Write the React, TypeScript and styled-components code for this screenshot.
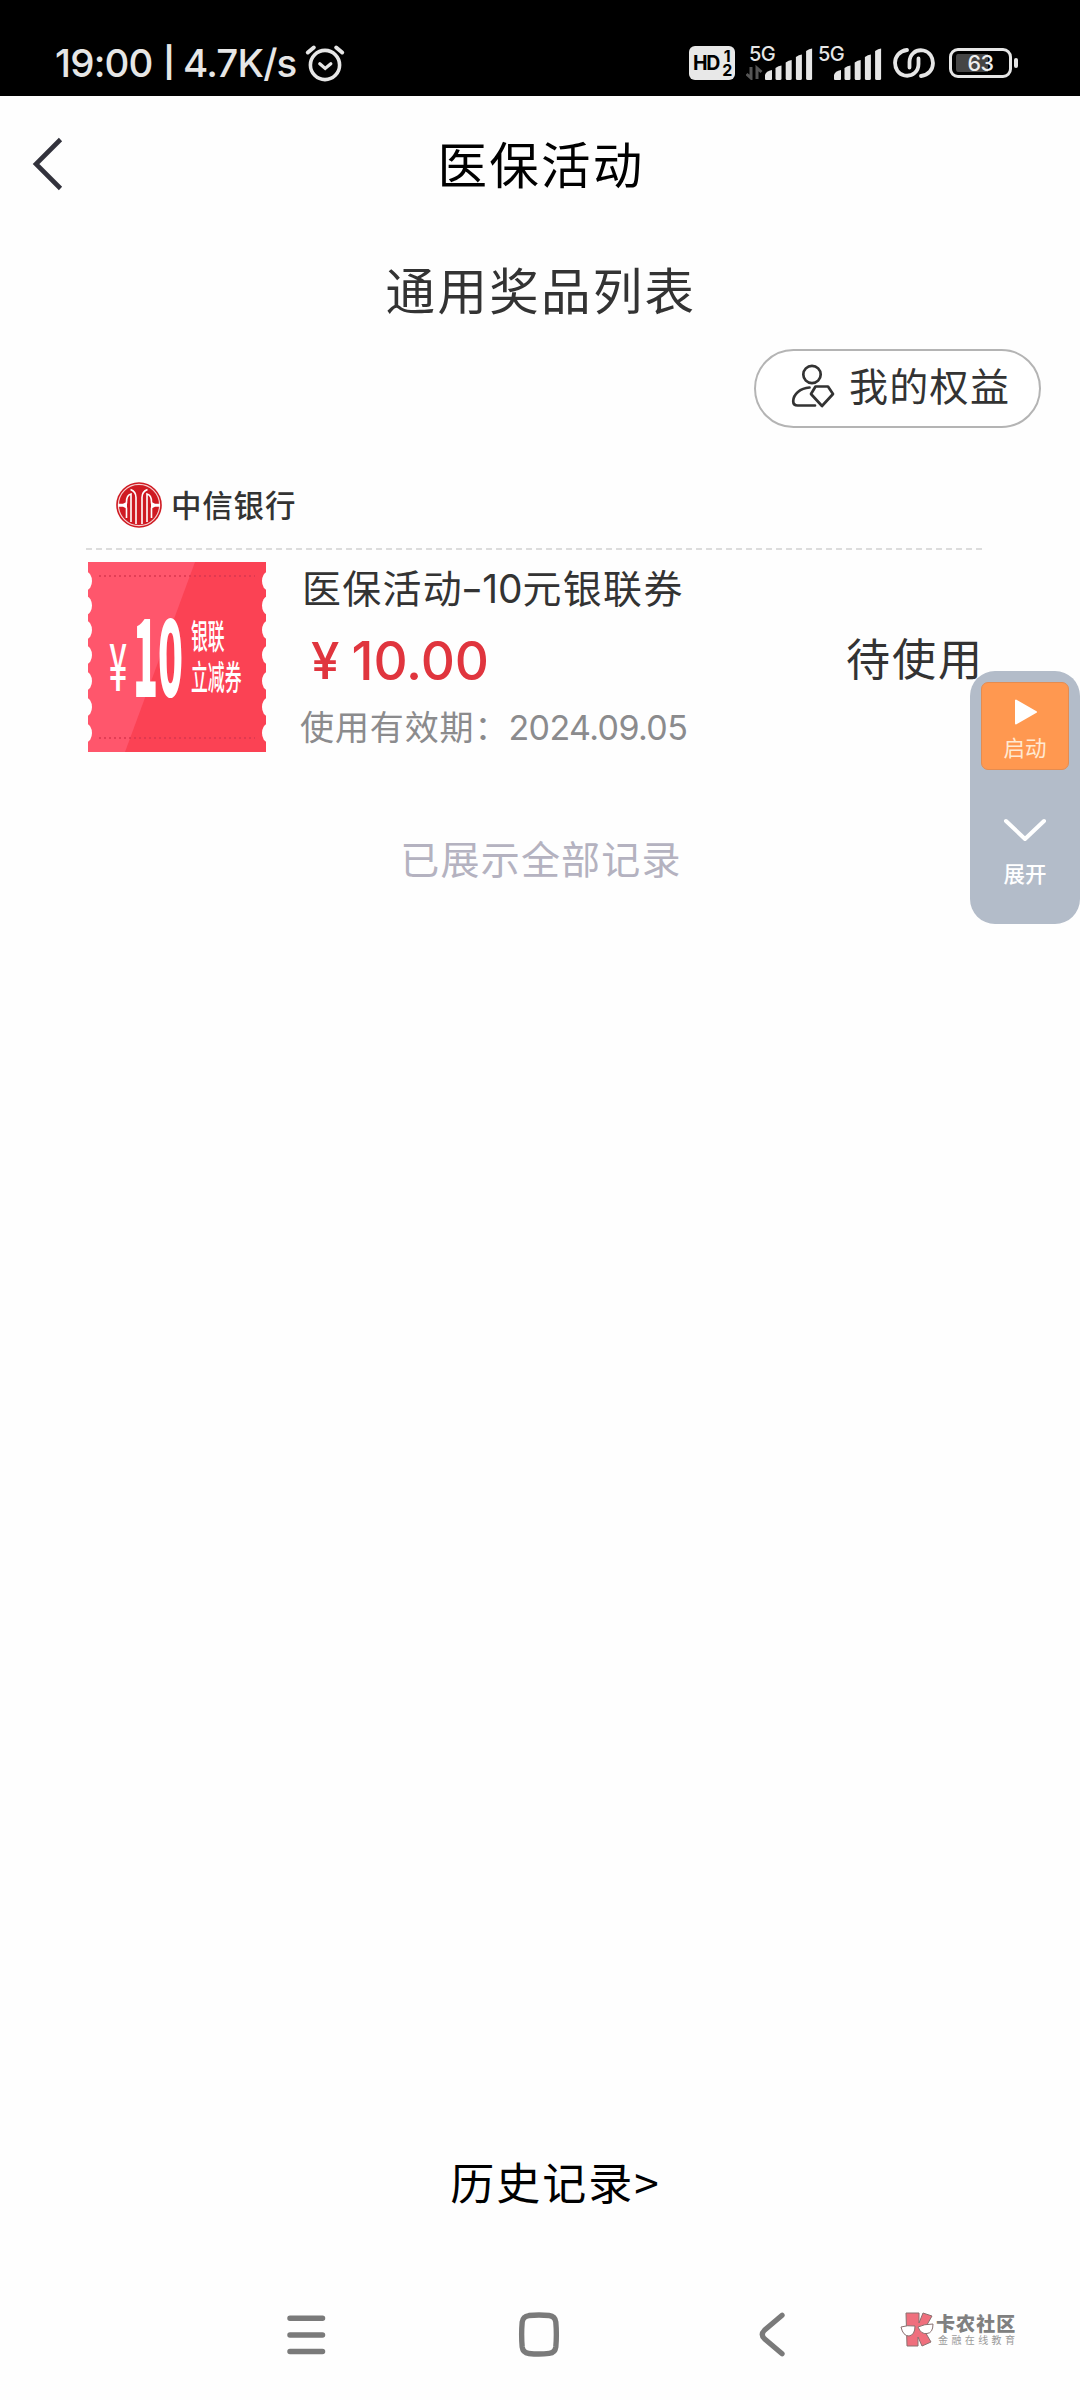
import React from "react";
import styled, { createGlobalStyle } from "styled-components";

const CJK = `"Noto Sans CJK SC", sans-serif`;
const LATIN = `Inter, "Noto Sans CJK SC", sans-serif`;

const Global = createGlobalStyle`
  * { box-sizing: border-box; }
  body { margin: 0; background: #fefefe; font-family: ${CJK}; }
`;

const Screen = styled.div`
  position: relative;
  display: flex;
  flex-direction: column;
  width: 1080px;
  height: 2400px;
  background: #fefefe;
  overflow: hidden;
`;

const StatusBar = styled.header`
  display: flex;
  justify-content: space-between;
  height: 96px;
  padding: 31px 62px 0 55px;
  background: #000;
`;

const StatusGroup = styled.div`
  display: flex;
  align-items: center;
  height: 64px;
`;

const Clock = styled.span`
  display: flex;
  align-items: center;
  width: 248px;
  font: 500 38.5px/64px ${LATIN};
  letter-spacing: -0.8px;
  color: #e6e6e6;
  white-space: pre;
`;

const Pipe = styled.span`
  margin: 0 9px 3px 11px;
  font-size: 30px;
  font-weight: 700;
`;

const StatusIcon = styled.svg<{ $gap?: number }>`
  display: block;
  margin-left: ${(p) => p.$gap ?? 0}px;
`;

const HdBadge = styled.span`
  display: flex;
  align-items: center;
  width: 46px;
  height: 34px;
  padding-left: 4px;
  border-radius: 6px;
  background: #e8e8e8;
  color: #000;
  font: 700 19.5px/34px ${LATIN};
  letter-spacing: -1.2px;
`;

const HdLines = styled.span`
  display: flex;
  flex-direction: column;
  align-items: center;
  margin-left: 3px;
  font-size: 16px;
  line-height: 14.5px;
`;

const Signal = styled.span<{ $gap: number; $width: number }>`
  display: grid;
  width: ${(p) => p.$width}px;
  height: 34px;
  margin-left: ${(p) => p.$gap}px;
  > * { grid-area: 1 / 1; }
`;

const NetLabel = styled.span<{ $indent: number }>`
  padding-left: ${(p) => p.$indent}px;
  font: 500 20px/16px ${LATIN};
  letter-spacing: -0.5px;
  color: #e6e6e6;
`;

const Battery = styled.span`
  display: flex;
  align-items: center;
  margin-left: 14px;
`;

const BatteryBody = styled.span`
  display: flex;
  align-items: center;
  justify-content: center;
  width: 63px;
  height: 30px;
  border: 3px solid #e6e6e6;
  border-radius: 9px;
  background: linear-gradient(90deg, #454545 32px, #000 32px) content-box;
  padding: 3px 4px;
  font: 500 21.5px/24px ${LATIN};
  letter-spacing: -0.4px;
  color: #eee;
`;

const BatteryTip = styled.span`
  width: 4px;
  height: 10px;
  margin-left: 2px;
  border-radius: 2px;
  background: #e6e6e6;
`;

const TitleBar = styled.div`
  display: grid;
  grid-template-columns: 120px 1fr 120px;
  align-items: center;
  height: 134px;
`;

const BackButton = styled.button`
  display: flex;
  height: 100%;
  align-items: center;
  padding: 2px 0 0 30px;
  border: 0;
  background: none;
`;

const Heading = styled.h1<{ $color: string }>`
  margin: 0;
  padding-left: 2px;
  font: 400 49.5px/72px ${CJK};
  letter-spacing: 2.3px;
  text-align: center;
  color: ${(p) => p.$color};
`;

const Subheading = styled.div`
  padding-top: 23px;
  height: 119px;
`;

const Actions = styled.div`
  display: flex;
  justify-content: flex-end;
  padding-right: 39px;
`;

const RightsButton = styled.button`
  display: flex;
  align-items: center;
  width: 287px;
  height: 79px;
  padding: 0 0 0 35px;
  border: 2px solid #b4b4b4;
  border-radius: 40px;
  background: #fff;
  color: #333;
`;

const RightsIcon = styled.svg`
  display: block;
  margin-bottom: 6px;
`;

const RightsLabel = styled.span`
  margin-left: 14px;
  padding-bottom: 9px;
  font: 400 39px/60px ${CJK};
  letter-spacing: 1.3px;
`;

const Card = styled.section`
  display: flex;
  flex-direction: column;
  padding: 43px 96px 0 86px;
`;

const BankRow = styled.div`
  display: flex;
  align-items: center;
  height: 68px;
  padding-left: 29px;
`;

const BankName = styled.span`
  margin: 0 0 3px 8px;
  font: 500 30.5px/44px ${CJK};
  letter-spacing: 0.8px;
  color: #333;
`;

const Dashes = styled.div`
  height: 2px;
  margin-top: 9px;
  background: repeating-linear-gradient(90deg, #dcdcdc 0 6px, transparent 6px 10px);
`;

const Prize = styled.div`
  display: flex;
  height: 190px;
  margin: 12px 0 0 2px;
`;

const Coupon = styled.div`
  display: grid;
  width: 178px;
  height: 190px;
  > * { grid-area: 1 / 1; }
`;

const CouponText = styled.div`
  display: flex;
  align-items: flex-start;
  color: #fff;
  white-space: nowrap;
`;

const Squeeze = styled.span<{ $x: number; $w: number; $size: number; $top: number; $weight: number; $gap?: number; $lh?: number }>`
  width: ${(p) => p.$w}px;
  margin: ${(p) => p.$top}px 0 0 ${(p) => p.$gap ?? 0}px;
  transform: scaleX(${(p) => p.$x});
  transform-origin: left top;
  font: ${(p) => p.$weight} ${(p) => p.$size}px/${(p) => p.$lh ?? p.$size}px ${CJK};
`;

const Details = styled.div`
  display: flex;
  flex-direction: column;
  flex: 1;
  padding-left: 35px;
  white-space: nowrap;
`;

const PrizeName = styled.div`
  margin-top: -6px;
  height: 60px;
  padding-left: 1px;
  font: 400 38.9px/60px ${CJK};
  letter-spacing: 1.4px;
  color: #333;
  span { font-family: ${LATIN}; letter-spacing: 0; }
`;

const Hyphen = styled.i`
  display: inline-block;
  font-family: ${LATIN};
  font-style: normal;
  width: 19px;
  transform: scaleX(1.25);
`;

const Price = styled.div`
  display: flex;
  align-items: center;
  height: 60px;
  margin-top: 15px;
  padding-left: 10px;
  color: #e0353e;
  font: 500 53px/60px ${LATIN};
  letter-spacing: -0.1px;
`;

const Yen = styled.span`
  width: 40.500px;
  font-size: 51px;
`;

const Validity = styled.div`
  height: 50px;
  margin: 10px 0 0 -1px;
  font: 400 34px/50px ${CJK};
  letter-spacing: 0.9px;
  color: #8b8b8d;
  span { font-family: ${LATIN}; letter-spacing: -0.6px; margin-left: -1px; }
`;

const State = styled.span`
  align-self: flex-start;
  margin-top: 63px;
  font: 400 44px/64px ${CJK};
  letter-spacing: 2px;
  color: #333;
`;

const EndNote = styled.p`
  margin: 75px 0 0;
  padding-left: 2px;
  font: 400 39px/60px ${CJK};
  letter-spacing: 1.2px;
  text-align: center;
  color: #b4b2c0;
`;

const History = styled.a`
  display: block;
  margin-top: auto;
  padding-left: 31px;
  font: 400 44px/64px ${CJK};
  letter-spacing: 2px;
  text-align: center;
  color: #000;
`;

const NavBar = styled.nav`
  display: flex;
  align-items: center;
  height: 130px;
  margin-top: 57px;
  padding-left: 287px;
`;

const NavIcon = styled.svg<{ $gap?: number }>`
  display: block;
  flex: none;
  margin: 0 0 1px ${(p) => p.$gap ?? 0}px;
`;

const Mark = styled.div`
  display: flex;
  align-items: center;
  flex: none;
  margin: -12px 0 0 113px;
`;

const MarkText = styled.div`
  display: flex;
  flex-direction: column;
  margin-left: 0;
  white-space: nowrap;
`;

const MarkName = styled.span`
  font: 900 19px/20px ${CJK};
  letter-spacing: 1.1px;
  color: #808080;
`;

const MarkTag = styled.span`
  margin-left: 2px;
  font: 400 10px/13px ${CJK};
  letter-spacing: 3.4px;
  color: #9a9a9a;
`;

const Floating = styled.aside`
  position: absolute;
  top: 671px;
  right: 0;
  display: flex;
  flex-direction: column;
  align-items: center;
  width: 110px;
  height: 253px;
  padding-top: 11px;
  border-radius: 25px;
  background: #b3bcc9;
`;

const FloatButton = styled.button<{ $primary?: boolean }>`
  display: flex;
  flex-direction: column;
  align-items: center;
  width: 88px;
  height: 88px;
  margin: ${(p) => (p.$primary ? 0 : "47px")} 0 0;
  padding: ${(p) => (p.$primary ? "14px" : "0")} 0 0;
  border: ${(p) => (p.$primary ? "1px solid #e58c50" : "0")};
  border-radius: 7px;
  background: ${(p) => (p.$primary ? "#ff9850" : "none")};
  color: ${(p) => (p.$primary ? "#ffe9d2" : "#fff")};
  font: ${(p) => (p.$primary ? 400 : 500)} 21.5px/30px ${CJK};
  span { margin-top: ${(p) => (p.$primary ? 5 : 15)}px; }
`;

const Bars = ({ x }: { x: number }) => (
  <g fill="#e6e6e6">
    <path d={`M${x} 33v-4q1-4 7-5v9q0 1-1 1h-5q-1 0-1-1z`} />
    {[20.5, 15, 9.5, 3.5].map((y, i) => (
      <path key={y} d={`M${x + 10.5 + i * 10.2} ${y + 1.5}q3-2.5 6-2.5v${33.5 - y}q0 1.5-1.5 1.5h-3q-1.5 0-1.5-1.5z`} />
    ))}
  </g>
);

const holes = [19, 43.5, 68, 93, 119, 145, 171];

export default function App() {
  return (
    <>
      <Global />
      <Screen>
        <StatusBar>
          <StatusGroup>
            <Clock>19:00<Pipe>|</Pipe>4.7K/s</Clock>
            <StatusIcon width="42" height="38" viewBox="0 0 42 38" $gap={1} fill="none" stroke="#e6e6e6" strokeLinecap="round">
              <circle cx="21" cy="21" r="14.6" strokeWidth="3.6" />
              <path d="M3.8 8.5l6-5M38.2 8.5l-6-5" strokeWidth="4" />
              <path d="M15.8 19.8l5.4 4.6 5.6-4.6" strokeWidth="3.3" />
            </StatusIcon>
          </StatusGroup>
          <StatusGroup>
            <HdBadge>
              HD
              <HdLines><span>1</span><span>2</span></HdLines>
            </HdBadge>
            <Signal $gap={11} $width={67}>
              <svg width="67" height="34" viewBox="0 0 67 34">
                <path d="M5 21v11l-4.500-4M11 33V22l4.500 4" fill="none" stroke="#555" strokeWidth="3" />
                <Bars x={19} />
              </svg>
              <NetLabel $indent={3}>5G</NetLabel>
            </Signal>
            <Signal $gap={5} $width={65}>
              <svg width="65" height="34" viewBox="0 0 65 34">
                <Bars x={16} />
              </svg>
              <NetLabel $indent={0}>5G</NetLabel>
            </Signal>
            <StatusIcon $gap={10} width="42" height="30" viewBox="0 0 42 30" fill="none" stroke="#e6e6e6" strokeWidth="3.800" strokeLinecap="round">
              <path d="M14 2C-2 4-1 25 11.500 27.500 20 29 25.500 23 25.500 16V10.500" />
              <path d="M28 28C44 26 43 5 30.500 2.500 22 1 16.500 7 16.500 14v5.500" />
            </StatusIcon>
            <Battery>
              <BatteryBody>63</BatteryBody>
              <BatteryTip />
            </Battery>
          </StatusGroup>
        </StatusBar>

        <TitleBar>
          <BackButton aria-label="返回">
            <svg width="34" height="54" viewBox="0 0 34 54" fill="none" stroke="#32323c" strokeWidth="4.6">
              <path d="M30.500 2.500L6 27l24.500 24.500" />
            </svg>
          </BackButton>
          <Heading $color="#000">医保活动</Heading>
        </TitleBar>
        <Subheading>
          <Heading as="h2" $color="#333">通用奖品列表</Heading>
        </Subheading>

        <Actions>
          <RightsButton>
            <RightsIcon width="44" height="44" viewBox="0 0 44 44" fill="none" stroke="#333" strokeWidth="2.7" strokeLinejoin="round" strokeLinecap="round">
              <circle cx="21" cy="10.500" r="8.700" />
              <path d="M18.500 23.500C9 24 2.500 30.500 2.200 37q0 4.500 4.500 4.500H24" />
              <path d="M24.500 22.500h12.500l5 7.500-11 12-11-12z" />
            </RightsIcon>
            <RightsLabel>我的权益</RightsLabel>
          </RightsButton>
        </Actions>

        <Card>
          <BankRow>
            <svg width="48" height="48" viewBox="0 0 48 48">
              <circle cx="24" cy="24" r="22.800" fill="#cf1a22" />
              <circle cx="24" cy="24" r="20.600" fill="none" stroke="#f6cfcf" strokeWidth="1.200" />
              <g fill="none" stroke="#fff" strokeWidth="1.600">
                <path d="M15.500 8.500q5.500 2 5.500 8V43M32.500 8.500q-5.500 2-5.500 8V43" />
                <path d="M16 41V13q-4.500 1-4.500 8v1.500M32 41V13q4.500 1 4.500 8v1.500" />
                <path d="M11.500 37V26.500M36.500 37V26.500" />
              </g>
              <path d="M3 22.800h5l4-2v7l-4-2H3zM45 22.800h-5l-4-2v7l4-2h5z" fill="#fff" />
            </svg>
            <BankName>中信银行</BankName>
          </BankRow>
          <Dashes />
          <Prize>
            <Coupon>
              <svg width="178" height="190" viewBox="0 0 178 190">
                <rect width="178" height="190" fill="#fb4254" />
                <path d="M0 0h107L37 190H0z" fill="#ff566c" />
                <path d="M11 14h156M11 176h156" stroke="#d9364f" strokeWidth="1.800" strokeDasharray="2 3" opacity=".75" />
                <g fill="#fefefe">
                  {holes.map((y) => (
                    <React.Fragment key={y}>
                      <ellipse cx="-1.500" cy={y} rx="5.500" ry="9" />
                      <ellipse cx="179.500" cy={y} rx="5.500" ry="9" />
                    </React.Fragment>
                  ))}
                </g>
              </svg>
              <CouponText>
                <Squeeze $gap={21} $w={24} $x={0.48} $size={66} $top={67} $weight={500}>¥</Squeeze>
                <Squeeze $w={57} $x={0.385} $size={107} $top={35} $weight={900}>10</Squeeze>
                <Squeeze $gap={1} $w={50} $x={0.495} $size={34} $top={52} $weight={500} $lh={41}>
                  银联<br />立减券
                </Squeeze>
              </CouponText>
            </Coupon>
            <Details>
              <PrizeName>医保活动<Hyphen>-</Hyphen><span>10</span>元银联券</PrizeName>
              <Price><Yen>¥</Yen>10.00</Price>
              <Validity>使用有效期：<span>2024.09.05</span></Validity>
            </Details>
            <State>待使用</State>
          </Prize>
        </Card>

        <EndNote>已展示全部记录</EndNote>
        <History>历史记录&gt;</History>

        <NavBar>
          <NavIcon width="39" height="40" viewBox="0 0 39 40" stroke="#7a7a7a" strokeWidth="5.500" strokeLinecap="round">
            <path d="M3 3.200h32.500M3 20h32.500M3 36.500h32.500" />
          </NavIcon>
          <NavIcon $gap={192} width="42" height="45" viewBox="0 0 39 42" fill="none" stroke="#7a7a7a" strokeWidth="5">
            <path d="M10 3.300Q19.500 2.300 29 3.300q5.500.7 6.200 6.200 1 11.500 0 23-.7 5.500-6.200 6.200-9.500 1-19 0-5.500-.7-6.200-6.200-1-11.500 0-23Q4.500 4 10 3.300z" />
          </NavIcon>
          <NavIcon $gap={199} width="28" height="45" viewBox="0 0 26 42" fill="none" stroke="#7a7a7a" strokeWidth="4.800" strokeLinecap="round">
            <path d="M21.500 3L5 17q-4 4 0 8l16.500 14" />
          </NavIcon>
          <Mark>
            <svg width="36" height="38" viewBox="0 0 36 38" stroke="#8a7070" strokeWidth="1">
              <path d="M6 3h13v10l4-10 9 3-8 14 7 12-9 4-4-9v9H7z" fill="#ef6f7d" />
              <path d="M1 17q6-2 14-1-0 9-6 10-6 0-8-9zM18 17q6-3 15-3 0 9-6 9.500-6 1-9-6.500z" fill="#fff" />
            </svg>
            <MarkText>
              <MarkName>卡农社区</MarkName>
              <MarkTag>金融在线教育</MarkTag>
            </MarkText>
          </Mark>
        </NavBar>

        <Floating>
          <FloatButton $primary>
            <svg width="26" height="30" viewBox="0 0 26 30">
              <path d="M4 3.500v23L24 15z" fill="#fff" stroke="#fff" strokeWidth="2" strokeLinejoin="round" />
            </svg>
            <span>启动</span>
          </FloatButton>
          <FloatButton>
            <svg width="44" height="26" viewBox="0 0 44 26" fill="none" stroke="#fff" strokeWidth="4" strokeLinecap="round" strokeLinejoin="round">
              <path d="M3 4l19 18L41 4" />
            </svg>
            <span>展开</span>
          </FloatButton>
        </Floating>
      </Screen>
    </>
  );
}
